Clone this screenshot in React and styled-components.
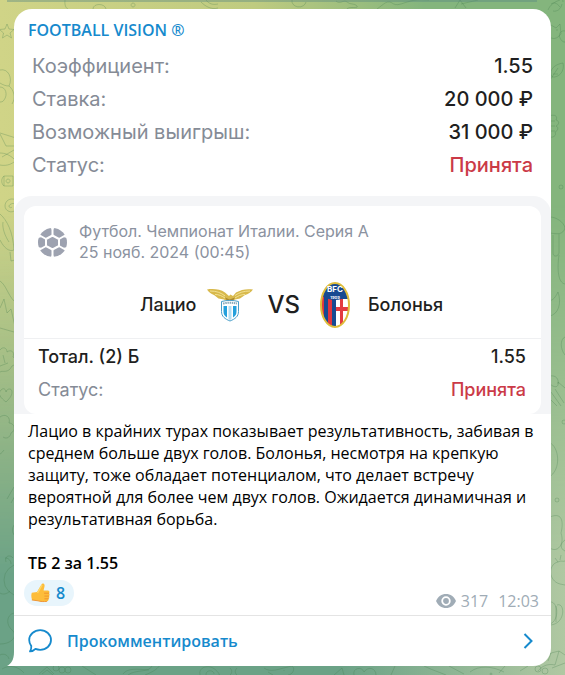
import React from 'react';
import styled, { createGlobalStyle } from 'styled-components';

const GlobalStyle = createGlobalStyle`
 * {box-sizing: border-box;}
 body {margin: 0; font-family: 'Open Sans', 'Noto Sans', sans-serif; color: #000;}
 h1, p, dl, dd, dt {margin: 0; font-weight: normal;}
 svg {display: block; flex: none;}
 button {cursor: pointer;}
`

const Chat = styled.main`
 position: relative;
 min-height: 100vh;
 padding: 9px 14px;
 overflow: hidden;
 background: linear-gradient(90deg, #d0d487 0%, #bfcb80 45%, #84b57d 75%);

 &::before {
  content: '';
  position: absolute;
  inset: 0;
  background: linear-gradient(90deg, #6ba286 60%, #b0c8a2 100%);
  mask-image: linear-gradient(transparent 30%, #000 85%);
 }

 /* lower edge of the previous message */
 &::after {
  content: '';
  position: absolute;
  top: 0;
  left: 7px;
  right: 28px;
  height: 2px;
  background-color: rgba(88, 136, 130, .4);
 }
`

const Doodles = styled.svg`
 position: absolute;
 inset: 0;
 width: 100%;
 height: 100%;
 fill: none;
 stroke: #3f7a4a;
 stroke-opacity: .28;
`

const Bubble = styled.article`
 position: relative;
 background-color: #fff;
 border-radius: 18px 18px 18px 0;
`

const Tail = styled.svg`
 position: absolute;
 right: 100%;
 bottom: 0;
 fill: #fff;
`

const Channel = styled.h1`
 padding: 10px 14px 9px;
 font-size: 16px;
 line-height: 22px;
 font-weight: 600;
 color: #168acd;
`

const Slip = styled.section`
 font-family: Inter, 'Liberation Sans', sans-serif;
`

const Summary = styled.dl`
 padding: 0 18px 14px;
`

const Row = styled.div`
 display: flex;
 justify-content: space-between;
 font-size: ${p => p.$small ? '18px' : '20px'};
 line-height: 33px;
`

const Label = styled.dt`
 color: ${p => p.$dark ? '#1f1f21' : '#858b96'};
 font-weight: ${p => p.$dark ? 500 : 400};
`

const Value = styled.dd`
 font-weight: 500;
 color: ${p => p.$red ? '#cb3a47' : '#1f1f21'};
`

const Frame = styled.div`
 padding: 10px 10px 0;
 background-color: #f4f5f7;
 border-radius: 18px 18px 0 0;
`

const Card = styled.div`
 background-color: #fff;
 border-radius: 12px;
`

const League = styled.div`
 display: flex;
 align-items: center;
 gap: 12px;
 padding: 15px 14px 0;
 font-size: 16px;
 line-height: 21px;
 color: #8b92a0;
`

const Match = styled.div`
 display: flex;
 align-items: center;
 justify-content: center;
 gap: 14px;
 height: 76px;
 padding: 8px 0 0 18px;
 font-size: 18px;
 font-weight: 500;
 color: #1f1f21;
 border-bottom: 1px solid #eff0f2;
`

const Club = styled.div`
 display: flex;
 align-items: center;
 gap: ${p => p.$away ? '18px' : '11px'};
 padding-left: ${p => p.$away ? '6px' : '0'};
`

const Versus = styled.span`
 font-size: 24px;
`

const Bets = styled.dl`
 padding: 1px 15px 8px 14px;
`

const Text = styled.div`
 padding: 6px 14px 0;
 font-size: 16px;
 line-height: 22px;

 p + p {margin-top: 22px;}
 b {font-weight: 600;}
`

const Info = styled.footer`
 display: flex;
 justify-content: space-between;
 align-items: flex-start;
 padding: 6px 12px 4px 10px;
`

const Reaction = styled.button`
 display: flex;
 align-items: center;
 gap: 6px;
 height: 26px;
 padding: 0 9px 0 7px;
 border: 0;
 border-radius: 13px;
 background-color: #e8f5fc;
 font: 600 16px 'Open Sans', sans-serif;
 color: #168acd;
`

const Meta = styled.div`
 display: flex;
 align-items: center;
 gap: 5px;
 padding-top: 11px;
 font-size: 16px;
 line-height: 20px;
 color: #a0acb6;

 time {margin-left: 5px;}
`

const Comment = styled.button`
 display: flex;
 align-items: center;
 gap: 15px;
 width: 100%;
 height: 51px;
 padding: 0 18px 0 14px;
 border: 0;
 border-top: 1px solid #e4e4e4;
 background: none;
 font: 600 16px 'Open Sans', sans-serif;
 color: #168acd;

 span {flex: 1; text-align: left;}
`

const summary = [
    {id: 1, label: 'Коэффициент:', value: '1.55'},
    {id: 2, label: 'Ставка:', value: '20 000 ₽'},
    {id: 3, label: 'Возможный выигрыш:', value: '31 000 ₽'},
    {id: 4, label: 'Статус:', value: 'Принята', red: true}
];

const bets = [
    {id: 1, label: 'Тотал. (2) Б', value: '1.55', dark: true},
    {id: 2, label: 'Статус:', value: 'Принята', red: true}
];

function Wallpaper() {
    return (
        <Doodles aria-hidden="true">
            <path d="M7 24l2 5 5 .5-4 3.500 1.500 5-4.500-3-4.500 3 1-5-4-3.500 5.500-.5z"/>
            <path d="M0 70c8-2 13 8 9 16 5 4 7 12 3 18M0 87c6 0 8 8 4 13-1 2-3 2-4 2M9 86c-3 0-6-1-9-3"/>
            <path d="M0 133l16 5M0 134l6 12h10M0 153c5 0 10 2 14 6M0 165c5 1 10 0 14-3M14 150L2 157"/>
            <path d="M4 176h9v10H4zM4 176c-3 2-3 8 0 10M8 179a2 2 0 1 0 .1 0"/>
            <path d="M16 200c-6-3-11 1-11 6s7 8 10 4 0-8-4-6-1 5 1 3"/>
            <path d="M0 214c7 6 13 18 14 36M0 240c4 8 9 12 14 10M3 222c-1 6 2 14 6 20M10 252l1 9 4-1"/>
            <path d="M0 281c6 4 8 14 14 20M0 308l4-9 3 14 4-4 5 22M0 328l14 4"/>
            <path d="M0 350c3-4 7-2 7 2 4-3 8 0 6 5 4 2 3 8-1 9-4 8-9 4-12 6M3 355l2 8M0 366l8-3"/>
            <path d="M6 402c-5-4-9-8-5-12 3-3 5 0 5 2 1-4 6-4 6 0 0 4-3 7-6 10z"/>
            <path d="M0 417c5-4 11 0 9 6 6 0 7 8 2 10-1 5-5 6-8 4M4 450c-2 3-4 4-4 4M7 499l7-12M11 503l5-9M17 523c-6 2-6 12 0 14"/>
            <circle cx="20" cy="580" r="16"/><path d="M6 562c-2-6 4-8 7-4M5 558c4 0 6 3 6 6M0 593c3 2 7 1 10-2"/>
            <path d="M14 613c-8 2-8 12-2 17s1 14-12 14M0 655c4-2 8 0 9 4"/>
            <path d="M65 0c-1 8 3 11 9 10M93 9c0-6 12-6 13 0M133 3a2 2 0 1 0 .1 0M201 2c4 4 10 8 17 6M206 0c3 4 7 5 12 4M292 0a6 5 0 0 0 14 2M336 1c4 4 8-2 11 1s8 1 10 4-8 0-10 3M377 9l8-6c8-4 6 4 16 1 12-4 16-5 28-4M455 8l5-8 6 8M461 4l17-4"/>
            <svg x="100%" overflow="visible">
                <path d="M-17 10c2-5 6-8 12-10M-14 4c3-2 6-1 9 3M-12 11c4 1 8-2 9-7M-11 0c2-5 9-4 9 2"/>
                <path d="M-14 25l5 3 4-4 1 10c-4 5-8 6-13 2M0 31c-4-1-7 3-5 7s4 4 5 4M-8 29v2"/>
                <path d="M-13 77c-4-8 4-13 11-14 2 8-4 15-11 14M-15 80l8-12M-12 74h5"/>
                <path d="M-16 116c6-2 9 0 7 4 4 1 3 5 0 6 3 1 2 5-1 6 2 4-2 6-7 5M-15 121h5M-15 126h5M-15 131h5"/>
                <circle cx="-4" cy="187" r="2"/>
                <path d="M-15 217c6 0 14 5 15 11-2 7-8 6-15 5M-12 235v18c0 4 5 4 6 0v-19M-6 255c-2 14-1 28 6 29"/>
                <path d="M-15 316c8-2 12-12 8-24-4 8-6 8-9 9M0 337c-5 2-5 12 0 18"/>
                <path d="M-15 376c6-1 9 3 8 8M-16 383c6 6 10 4 9-1l7 6M-14 392l10 14M-10 389l9 14M-16 398l8 8"/>
                <path d="M-15 443c8 3 13 26-2 35M-15 517c14-6 13 8 11 16 4 12-4 20-11 15M0 540c-5 3-5 9 0 11"/>
                <circle cx="-8" cy="500" r="2"/><circle cx="-1" cy="422" r="2"/>
                <path d="M-7 562c-10 2-10 19 2 22l5 1M-7 562c3-2 5 0 7-1M-7 562l-3-4M-5 560l1-5M-15 602c8-1 10 18 0 22M-8 605c8-3 9 18-6 20M-9 606v16"/>
                <path d="M-23 659l9-6 8-2-4 14c-8-2-14 2-17 6M-14 653l-3 8M-6 651l6 4M0 663l-13 5"/>
            </svg>
            <svg y="100%" overflow="visible">
                <path d="M2-6c8-5 17-2 22 4M39-1l8-7 7 7M42-1l5-4 6 5M82-9l14 9M123-1c4-6 14-5 26-4M128 0c8-6 21-2 24-9M145 0c5-2 12-5 15-10"/>
                <circle cx="56" cy="-7" r="3"/><circle cx="62" cy="-5" r="3"/><circle cx="68" cy="-5" r="3"/>
                <path d="M200 0c-2-8 8-10 13-7s7 7 6 7M206 0c0-6 8-5 8-1M230-7c4 4 0 7 0 7M237-7c-4 4 0 7 0 7M264-7c7 5 14 1 28-2 4 3 0 9-4 9M268-3l5 3M284-5v1M334 0l8-7 2 7M354 0c-2-7 8-9 10-3 4-6 12-4 12 3M391 0l4-9M424-9c8 4 15 6 22 9M449-9l15 8M470-3c9-7 22-6 34 0M505-9l-6 7M520-4l8-5"/>
                <circle cx="538" cy="-6" r="3"/><circle cx="545" cy="-4" r="3"/><circle cx="491" cy="-1" r="1"/>
            </svg>
        </Doodles>
    );
}

function Ball() {
    return (
        <svg width="29" height="29" viewBox="0 0 29 29">
            <circle cx="14.500" cy="14.500" r="14.500" fill="#9da2b0"/>
            <g stroke="#fff" strokeWidth="2" fill="none" strokeLinejoin="round">
                <path d="M14.500 7.500l6.500 3.500v7l-6.500 3.500L8 18v-7z"/>
                <path d="M14.500 7.500V0M21 11l7-4M21 18l7 4M14.500 21.500V29M8 18l-7 4M8 11L1 7"/>
            </g>
            <path d="M13 0h3l-1.500 3zM13 29h3l-1.500-3zM1 6l3 3-4 1zM28 6l-3 3 4 1zM1 23l3-3-4-1zM28 23l-3-3 4-1z" fill="#fff"/>
        </svg>
    );
}

function Lazio() {
    return (
        <svg width="46" height="34" viewBox="0 0 46 34">
            <path d="M0 1.500c6-1 13-.5 18 3l4 3.500 1.500-1.500L26 8l3-3.500c5-3 11-4 17-3-2 3-5 4.500-8 5.500l-5 3.500-5 1-3 2h-5l-3-2-5.500-1L7 7C4 6 1.500 4 0 1.500z" fill="#d8b94c"/>
            <path d="M3 3c6 0 11 1.500 15 5M8 6.500c4 0 7 1.500 10 3.500M43 3c-6 0-11 1.500-15 4.500M38 6.500c-4 0-7 1.500-10 3.500" fill="none" stroke="#f2e294"/>
            <path d="M18 9.500l4.500 2L28 9.500l-2.500 4h-5z" fill="#a88732"/>
            <path d="M14.500 13.500c6-1.500 11-1.500 17 0v10c0 5-3.500 7.500-8.500 9.500-5-2-8.500-4.500-8.500-9.500z" fill="#fff" stroke="#4a9fca"/>
            <path d="M16.500 18h3.500v11.500c-2.500-1.500-3.500-3-3.500-6zM26 18h3.500v5.500c0 3-1 4.500-3.500 6z" fill="#24a0dc"/>
            <path d="M21.500 18h3v13l-1.500 1-1.500-1z" fill="#24a0dc" opacity=".35"/>
            <path d="M16 15.500c5-1 9-1 14 0" fill="none" stroke="#8aaaba" strokeWidth="2" strokeDasharray="1.500 .7"/>
        </svg>
    );
}

function Bologna() {
    return (
        <svg width="30" height="46" viewBox="0 0 30 46">
            <defs><clipPath id="oval"><ellipse cx="15" cy="23" rx="14" ry="22"/></clipPath></defs>
            <g clipPath="url(#oval)">
                <path d="M0 0h30v46H0z" fill="#174a91"/>
                <path d="M0 12h4v34H0zM8 16h4v30H8z" fill="#df3540"/>
                <path d="M16 17h14v29H16z" fill="#fff"/>
                <path d="M20 17h3v8h7v4h-7v17h-3V29h-4v-4h4z" fill="#e33b40"/>
                <path d="M0 12C4 16 10 18 15 18s11-2 15-6V0H0z" fill="#174a91"/>
            </g>
            <ellipse cx="15" cy="23" rx="14" ry="22" fill="none" stroke="#dfbd3c" strokeWidth="2"/>
            <text x="15" y="10" textAnchor="middle" fontSize="8" fontWeight="700" fill="#fff">BFC</text>
            <text x="15" y="17" textAnchor="middle" fontSize="4" fontWeight="700" fill="#fff">1909</text>
        </svg>
    );
}

function Thumb() {
    return (
        <svg width="19" height="20" viewBox="0 0 19 20">
            <path d="M.8 9.800L6 9l4.500-7.500C11-.2 13.500.2 13.600 2.300c0 2-.8 3.500-1 5.200l4.400.1c1.600.1 1.800 2 .8 2.600 1.200.8 1 2.400 0 2.900.8.8.6 2.300-.4 2.700.3 1.500-.5 2.500-1.900 2.600-3 .3-6 .3-8.500-.6L1.200 17c-1-2-1.200-5-.4-7.200z" fill="#fdbd3a"/>
            <path d="M17.800 10.200h-4.300M17.800 13.100h-4M17.400 15.800h-3.600M1.200 17l5.800.8c2.500.9 5.500.9 8.500.6" fill="none" stroke="#ee8f2b" strokeWidth=".9" strokeLinecap="round"/>
            <path d="M6.500 10l4.500-8" fill="none" stroke="#ffd667" strokeWidth="1.500"/>
        </svg>
    );
}

export default function App() {
    return (
        <>
    <GlobalStyle/>
    <Chat>
        <Wallpaper/>
        <Bubble>
            <Tail width="7" height="14" viewBox="0 0 7 14"><path d="M7 0v14H0c4-2 7-6 7-14z"/></Tail>
            <Channel>FOOTBALL VISION ®</Channel>
            <Slip>
                <Summary>
                    {summary.map(i =>
                        <Row key={i.id}><Label>{i.label}</Label><Value $red={i.red}>{i.value}</Value></Row>
                    )}
                </Summary>
                <Frame>
                    <Card>
                        <League>
                            <Ball/>
                            <div>
                                <p>Футбол. Чемпионат Италии. Серия А</p>
                                <p>25 нояб. 2024 (00:45)</p>
                            </div>
                        </League>
                        <Match>
                            <Club><span>Лацио</span><Lazio/></Club>
                            <Versus>VS</Versus>
                            <Club $away><Bologna/><span>Болонья</span></Club>
                        </Match>
                        <Bets>
                            {bets.map(i =>
                                <Row key={i.id} $small><Label $dark={i.dark}>{i.label}</Label><Value $red={i.red}>{i.value}</Value></Row>
                            )}
                        </Bets>
                    </Card>
                </Frame>
            </Slip>
            <Text>
                <p>Лацио в крайних турах показывает результативность, забивая в среднем больше двух голов. Болонья, несмотря на крепкую защиту, тоже обладает потенциалом, что делает встречу вероятной для более чем двух голов. Ожидается динамичная и результативная борьба.</p>
                <p><b>ТБ 2 за 1.55</b></p>
            </Text>
            <Info>
                <Reaction><Thumb/>8</Reaction>
                <Meta>
                    <svg width="20" height="14" viewBox="0 0 20 14">
                        <path d="M0 7C2 2.500 5.500 0 10 0s8 2.500 10 7c-2 4.500-5.500 7-10 7S2 11.500 0 7z" fill="#a0acb6"/>
                        <circle cx="10" cy="7" r="3.800" fill="#a0acb6" stroke="#fff" strokeWidth="1.800"/>
                    </svg>
                    <span>317</span>
                    <time>12:03</time>
                </Meta>
            </Info>
            <Comment>
                <svg width="24" height="24" viewBox="0 0 24 24" fill="none" stroke="#168acd" strokeWidth="1.800" strokeLinejoin="round">
                    <path d="M12.200 1.200C18.200 1.200 23 5.400 23 11s-4.800 9.800-10.800 9.800c-1.700 0-3.300-.3-4.700-.9-1.400 1.500-3 2.400-5.500 2.500 1-1.300 1.400-2.800 1.300-5.300C2 15.400 1.200 13.300 1.200 11c0-5.600 5-9.800 11-9.800z"/>
                </svg>
                <span>Прокомментировать</span>
                <svg width="10" height="16" viewBox="0 0 10 16" fill="none" stroke="#168acd" strokeWidth="2"><path d="M1.500 1L8.500 8l-7 7"/></svg>
            </Comment>
        </Bubble>
    </Chat>
    </>
    );
}
